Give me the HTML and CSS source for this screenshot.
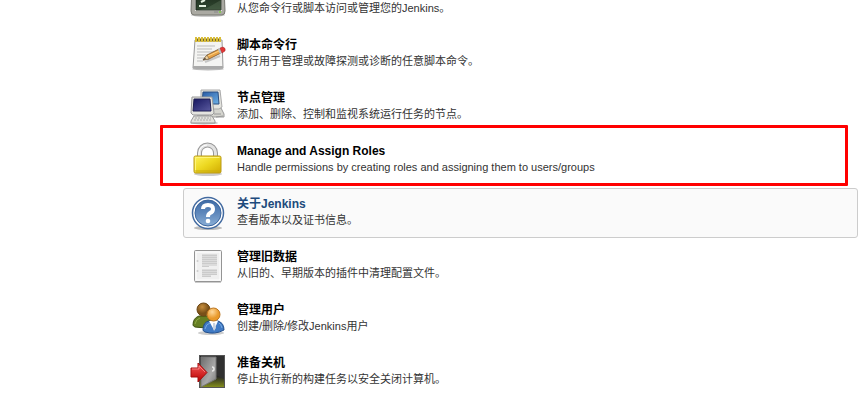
FILE: index.html
```html
<!DOCTYPE html>
<html lang="zh-CN">
<head>
<meta charset="utf-8">
<title>Jenkins</title>
<link rel="stylesheet" href="styles.css">
</head>
<body>
<main class="main-panel">
  <ul class="manage-list">
    <li class="item item-cut">
      <svg class="icon" viewBox="0 0 34 34" aria-hidden="true">
        <defs><linearGradient id="crt" x2="0" y2="1"><stop stop-color="#182418"/><stop offset="1" stop-color="#304830"/></linearGradient></defs>
        <ellipse cx="17" cy="31" rx="17" ry="2" fill="#ccc"/>
        <path d="M1 2h32l1 25q0 4-3 4H3q-3 0-3-4z" fill="#aaa9a2" stroke="#777770"/>
        <path d="M4 4h26l1 23H4z" fill="#e4e4df"/>
        <path d="M5 5h25v21H5z" fill="url(#crt)" stroke="#20281f"/>
        <path d="M10 18l4-2M8 22h7" stroke="#e4f0df" stroke-width="2"/>
        <path d="M16 24l14-8v10H7z" fill="#637a60" opacity=".35"/>
        <path d="M23 28h4" stroke="#888"/><circle cx="29" cy="28" r="1" fill="#78d43a"/>
      </svg>
      <div class="text"><p class="desc">从您命令行或脚本访问或管理您的Jenkins。</p></div>
    </li>
    <li class="item">
      <svg class="icon" viewBox="0 0 34 34" aria-hidden="true">
        <ellipse cx="17" cy="32" rx="16" ry="1.5" fill="#bbb"/>
        <path d="M4 3h27l1 28H2z" fill="#f4f4f2" stroke="#999"/>
        <path d="M2 29h30v2.500H2z" fill="#aaa"/>
        <path d="M6 9h18M6 12h15M6 15h18M6 18h13M6 21h9M6 24h6" stroke="#bbb"/>
        <path d="M5 3h25" stroke="#796b22" stroke-width="3"/>
        <path d="M5 0v5M8 0v5M11 0v5M14 0v5M17 0v5M20 0v5M23 0v5M26 0v5M29 0v5" stroke="#d9bd38" stroke-width="2"/>
        <path d="M14 25l15-6" stroke="#999" stroke-width="2" opacity=".5"/>
        <path d="M12 23l4-5 12-6 2 4-12 6z" fill="#e9a345" stroke="#74502b" stroke-width=".8"/>
        <path d="M17 19l11-5" stroke="#ffd283"/>
        <path d="M12 23l4-5 2 4z" fill="#efd3a2" stroke="#655440" stroke-width=".5"/><path d="M12 23l2-2 1 1z" fill="#222"/>
        <path d="M27 12l2 5 2-1-2-5z" fill="#bbc4c9"/>
        <path d="M29 11l3-1q3 1 2 4l-3 2z" fill="#e23636" stroke="#a52121" stroke-width=".5"/>
      </svg>
      <div class="text"><h2 class="title">脚本命令行</h2><p class="desc">执行用于管理或故障探测或诊断的任意脚本命令。</p></div>
    </li>
    <li class="item">
      <svg class="icon" viewBox="0 0 34 34" aria-hidden="true">
        <defs><linearGradient id="screen1" x2="1" y2="1"><stop stop-color="#285aa4"/><stop offset="1" stop-color="#6eb1e5"/></linearGradient><linearGradient id="screen2" x2="1" y2="1"><stop stop-color="#16165f"/><stop offset="1" stop-color="#5b5ba0"/></linearGradient></defs>
        <path d="M21 18h9l3 6v3H19z" fill="#d5d5cf" stroke="#999"/>
        <path d="M10 0h19l2 17-3 2H10z" fill="#e4e4df" stroke="#aaa"/>
        <path d="M12 2h15l1 12H11z" fill="url(#screen1)" stroke="#2b4f81"/>
        <ellipse cx="13" cy="33" rx="14" ry="1.500" fill="#bbb"/>
        <path d="M6 23h12v4H6z" fill="#b7b7b1"/>
        <path d="M1 7h20l2 16-2 2H2l-2-2z" fill="#e4e4df" stroke="#999"/>
        <path d="M3 9h16l1 12H2z" fill="url(#screen2)" stroke="#202052"/>
        <path d="M3 26h18l3 5v2H0v-2z" fill="#e2e2dc" stroke="#999"/>
        <path d="M4 28h16M3 30h18" stroke="#aaa" stroke-dasharray="2 1"/>
        <path d="M23 24h7M25 27l7-1" stroke="#999"/>
      </svg>
      <div class="text"><h2 class="title">节点管理</h2><p class="desc">添加、删除、控制和监视系统运行任务的节点。</p></div>
    </li>
    <li class="item item-marked">
      <svg class="icon" viewBox="0 0 34 34" aria-hidden="true">
        <defs><linearGradient id="gold" x2="1" y2="1"><stop stop-color="#fff45d"/><stop offset=".5" stop-color="#ecd71f"/><stop offset="1" stop-color="#d0aa00"/></linearGradient></defs>
        <ellipse cx="17" cy="31" rx="14" ry="2" fill="#ccc"/>
        <path d="M8.500 15V10a8 8 0 0 1 16 0v5" fill="none" stroke="#999" stroke-width="5"/>
        <path d="M8.500 15V10a8 8 0 0 1 16 0v5" fill="none" stroke="#e2e2e2" stroke-width="3"/>
        <path d="M8 14v-4a8 8 0 0 1 8-8" fill="none" stroke="#fff"/>
        <rect x="3" y="13" width="27" height="17" rx="1.500" fill="url(#gold)" stroke="#b99818"/>
        <path d="M4.500 29V14.500h24" fill="none" stroke="#fff579"/>
        <path d="M4 28h25" stroke="#c8aa12"/>
      </svg>
      <div class="text"><h2 class="title">Manage and Assign Roles</h2><p class="desc">Handle permissions by creating roles and assigning them to users/groups</p></div>
    </li>
    <li class="item item-active">
      <svg class="icon" viewBox="0 0 34 34" aria-hidden="true">
        <defs><linearGradient id="help" x2="0" y2="1"><stop stop-color="#3e6ba5"/><stop offset=".5" stop-color="#5e87bb"/><stop offset="1" stop-color="#8aaed5"/></linearGradient></defs>
        <ellipse cx="17" cy="32" rx="14" ry="2" fill="#bbb"/>
        <circle cx="17" cy="17" r="15.500" fill="#fff" stroke="#426aa0" stroke-width="1.500"/>
        <circle cx="17" cy="17" r="13" fill="url(#help)" stroke="#3a659e"/>
        <path d="M12 13q0-4 5-4t5 4q0 3-3 4-2 1-2 4" fill="none" stroke="#fff" stroke-width="4"/>
        <circle cx="17" cy="25" r="2.300" fill="#fff"/>
      </svg>
      <div class="text"><h2 class="title">关于Jenkins</h2><p class="desc">查看版本以及证书信息。</p></div>
    </li>
    <li class="item">
      <svg class="icon" viewBox="0 0 34 34" aria-hidden="true">
        <path d="M4 33h26" stroke="#ccc" stroke-width="2"/>
        <rect x="3.500" y="1.500" width="27" height="31" rx="1" fill="#f0f0f0" stroke="#949494"/>
        <path d="M5 3h24v28H5z" fill="none" stroke="#fff"/>
        <path d="M11 5h15v12h-8v1h-7zM11 20h15v6h-6v2h-9z" fill="#dcdcdc"/>
        <path d="M11 6.500h15M11 8.500h15M11 10.500h15M11 12.500h15M11 14.500h15M11 17.500h7M11 21.500h15M11 23.500h15M11 25.500h15M11 27.500h9" stroke="#cbcbcb"/>
        <circle cx="6.500" cy="12" r="1" fill="#ccc"/><circle cx="6.500" cy="22" r="1" fill="#ccc"/>
      </svg>
      <div class="text"><h2 class="title">管理旧数据</h2><p class="desc">从旧的、早期版本的插件中清理配置文件。</p></div>
    </li>
    <li class="item">
      <svg class="icon" viewBox="0 0 34 34" aria-hidden="true">
        <defs><radialGradient id="brown" cx=".4" cy=".3"><stop stop-color="#c68d3c"/><stop offset="1" stop-color="#795018"/></radialGradient><radialGradient id="skin" cx=".4" cy=".3"><stop stop-color="#ffd99b"/><stop offset="1" stop-color="#e99929"/></radialGradient></defs>
        <ellipse cx="20" cy="31" rx="13" ry="2" fill="#ccc"/>
        <path d="M2 23q0-7 6-9h10q5 3 4 10-10 3-18 1-2-1-2-2z" fill="#667f23" stroke="#3e5011"/>
        <path d="M4 22q1-5 5-6" fill="none" stroke="#8fa943"/>
        <circle cx="12.500" cy="7.500" r="6.500" fill="url(#brown)" stroke="#6b4512"/>
        <path d="M12 28q0-8 6-9h9q6 2 6 9-9 5-19 2-2-1-2-2z" fill="#407ac4" stroke="#214e8b"/>
        <path d="M14 27q1-5 5-6M31 26q-1-4-3-5" fill="none" stroke="#78aae3"/>
        <path d="M18 19h9l-4 9z" fill="#fff"/><path d="M22 21h2l1 5-2 3-1-3z" fill="#c9d2df"/>
        <circle cx="22.500" cy="12.500" r="6.500" fill="url(#skin)" stroke="#bd7721"/>
      </svg>
      <div class="text"><h2 class="title">管理用户</h2><p class="desc">创建/删除/修改Jenkins用户</p></div>
    </li>
    <li class="item">
      <svg class="icon" viewBox="0 0 34 34" aria-hidden="true">
        <defs><linearGradient id="floor" x2="0" y2="1"><stop offset=".65" stop-color="#252525"/><stop offset="1" stop-color="#87921b"/></linearGradient><linearGradient id="door" x2="1" y2="1"><stop stop-color="#6c6c6c"/><stop offset=".6" stop-color="#aaa"/><stop offset="1" stop-color="#777"/></linearGradient><linearGradient id="arrow" x2="0" y2="1"><stop stop-color="#f65b5b"/><stop offset="1" stop-color="#b90000"/></linearGradient></defs>
        <rect x="8.500" y=".5" width="25" height="32" fill="url(#floor)" stroke="#555"/>
        <path d="M25 1h8v23l-8-4z" fill="#303030"/>
        <path d="M10 2h15v22L10 32z" fill="url(#door)" stroke="#777"/>
        <path d="M21 12q2 0 2 2t-2 2" fill="none" stroke="#e8e8e8" stroke-width="1.500"/>
        <path d="M0 13h7V8l9 9.500L7 27v-5H0z" fill="url(#arrow)" stroke="#a30d0d"/>
        <path d="M1 14h7v-3l6 6" fill="none" stroke="#ff9a9a" opacity=".7"/>
      </svg>
      <div class="text"><h2 class="title">准备关机</h2><p class="desc">停止执行新的构建任务以安全关闭计算机。</p></div>
    </li>
  </ul>
</main>
</body>
</html>
```
FILE: styles.css
```css
body {
  margin: 0;
  background: #fff;
  color: #333;
  font-family: "Liberation Sans", "Noto Sans CJK SC", sans-serif;
}

.main-panel {
  margin: 0 10px 0 183px;
}

.manage-list {
  display: flex;
  flex-direction: column;
  gap: 3px;
  margin: 0;
  padding: 0;
  list-style: none;
}

.item {
  position: relative;
  display: flex;
  align-items: center;
  gap: 12px;
  padding: 7px;
  border: 1px solid transparent;
  border-radius: 3px;
}

/* The first row is scrolled partly out of view. */
.item-cut {
  box-sizing: border-box;
  height: 26px;
  padding-top: 0;
  align-items: flex-end;
}

.item-active {
  border-color: #ccc;
  background: #fafafa;
}

.item-active .title {
  color: #204a7c;
}

.item-marked::after {
  content: "";
  position: absolute;
  z-index: 1;
  inset: -11px 9px -2px -24px;
  border: 3px solid #f00;
  border-radius: 1px;
}

.icon {
  flex: none;
  width: 34px;
  height: 34px;
  overflow: visible;
}

.text {
  min-width: 0;
  padding-bottom: 2px;
}

.title,
.desc {
  margin: 0;
}

.title {
  color: #000;
  font-size: 12px;
  font-weight: bold;
  line-height: 17px;
}

.desc {
  font-size: 11px;
  line-height: 15px;
}
```
